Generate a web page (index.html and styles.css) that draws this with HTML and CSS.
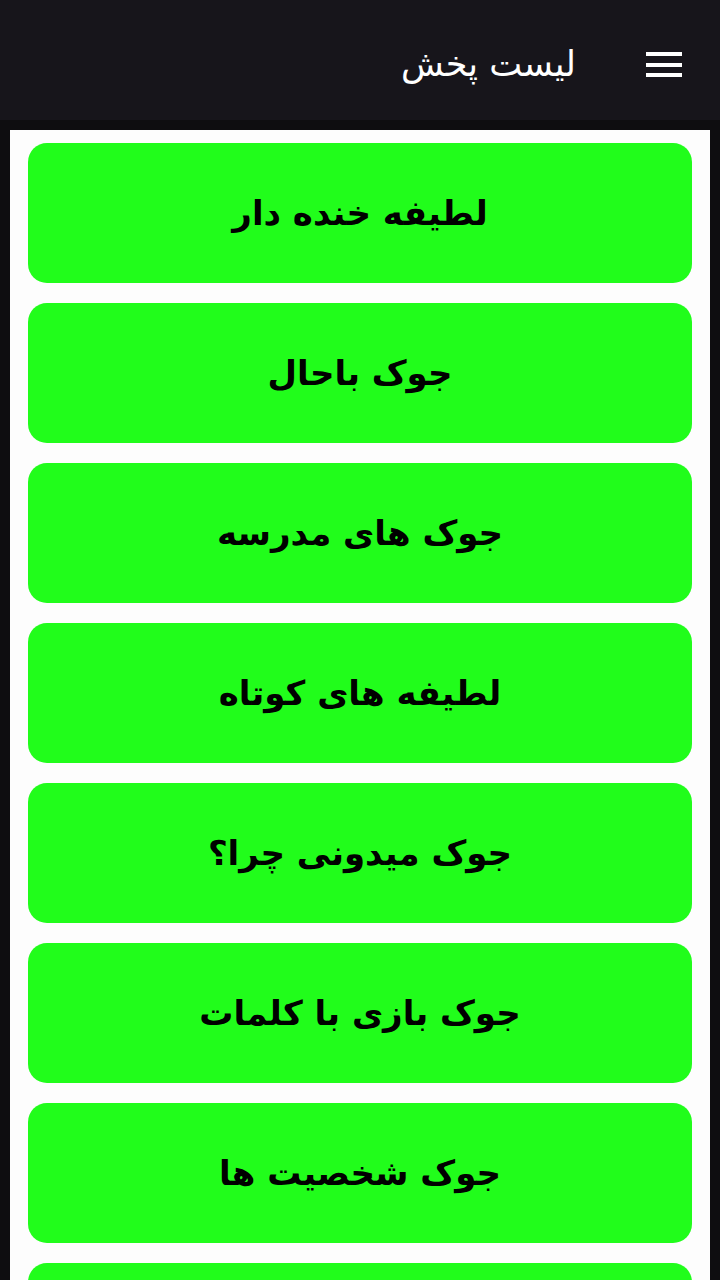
FILE: index.html
```html
<!DOCTYPE html>
<html lang="fa" dir="rtl">
<head>
<meta charset="utf-8">
<link rel="stylesheet" href="styles.css">
</head>
<body>
<header class="topbar">
  <div class="menu-btn" aria-label="menu">
    <span></span><span></span><span></span>
  </div>
  <h1 class="title">لیست پخش</h1>
</header>
<div class="strip"></div>
<main class="panel">
  <a class="item">لطیفه خنده دار</a>
  <a class="item">جوک باحال</a>
  <a class="item">جوک های مدرسه</a>
  <a class="item">لطیفه های کوتاه</a>
  <a class="item">جوک میدونی چرا؟</a>
  <a class="item">جوک بازی با کلمات</a>
  <a class="item">جوک شخصیت ها</a>
  <a class="item" aria-hidden="true"></a>
</main>
</body>
</html>
```
FILE: styles.css
```css
html, body {
  margin: 0;
  padding: 0;
  background: #0e0d10;
  font-family: "DejaVu Sans", "Noto Sans", sans-serif;
}
body {
  width: 720px;
  height: 1280px;
  overflow: hidden;
}
.topbar {
  height: 120px;
  background: #17151b;
  display: flex;
  align-items: center;
  padding-right: 38px;
  box-sizing: border-box;
}
.menu-btn {
  width: 36px;
  height: 25px;
  display: flex;
  flex-direction: column;
  justify-content: space-between;
  margin-top: 9px;
}
.menu-btn span {
  display: block;
  height: 4px;
  background: #ffffff;
}
.title {
  margin: 8px 70px 0 0;
  color: #ffffff;
  font-size: 35px;
  font-weight: normal;
  line-height: 1;
}
.strip {
  height: 10px;
  background: #0e0d10;
}
.panel {
  margin: 0 10px;
  background: #fdfdfd;
  padding: 13px 18px 0 18px;
  display: flex;
  flex-direction: column;
  gap: 20px;
  min-height: 1200px;
}
.item {
  height: 140px;
  flex: none;
  background: #21fd1b;
  border-radius: 19px;
  display: flex;
  align-items: center;
  justify-content: center;
  color: #000000;
  font-size: 34px;
  font-weight: bold;
  text-decoration: none;
}
```
